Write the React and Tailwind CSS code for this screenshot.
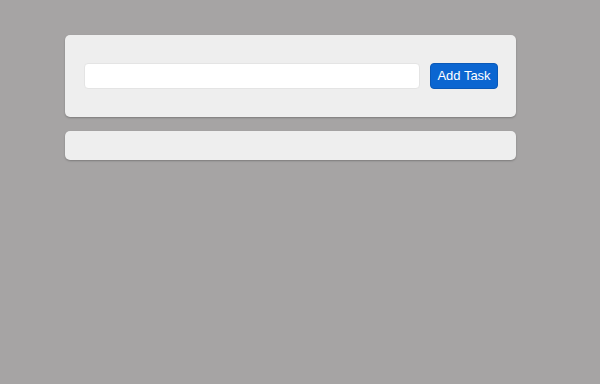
import React, { useState } from "react";

export default function App() {
  const [tasks, setTasks] = useState([]);
  const [text, setText] = useState("");

  const addTask = () => {
    if (!text.trim()) return;
    setTasks([...tasks, text.trim()]);
    setText("");
  };

  return (
    <div className="min-h-[384px] bg-[#a6a4a4] pt-[35px] font-['Liberation_Sans',Arial,sans-serif]">
      <div className="ml-[65px] w-[451px] flex flex-col gap-[14px]">
        {/* Input card */}
        <div className="h-[82px] rounded-[5px] bg-[#eeeeee] shadow-[0_1px_2px_rgba(0,0,0,0.25)] pl-[19px] pr-[18px] flex items-center gap-[10px]">
          <input
            className="h-[26px] flex-1 rounded-[4px] border border-[#e4e4e4] bg-white px-2 text-[13px] outline-none"
            value={text}
            onChange={(e) => setText(e.target.value)}
          />
          <button
            className="h-[26px] w-[68px] rounded-[4px] bg-[#0b66d1] text-[13px] text-white border border-[#0a59b8]"
            onClick={addTask}
          >
            Add Task
          </button>
        </div>

        {/* Task list */}
        <div className="min-h-[29px] rounded-[5px] bg-[#eeeeee] shadow-[0_1px_2px_rgba(0,0,0,0.25)]">
          {tasks.map((t, i) => (
            <div key={i} className="px-4 py-2 text-[13px] text-gray-800">
              {t}
            </div>
          ))}
        </div>
      </div>
    </div>
  );
}
